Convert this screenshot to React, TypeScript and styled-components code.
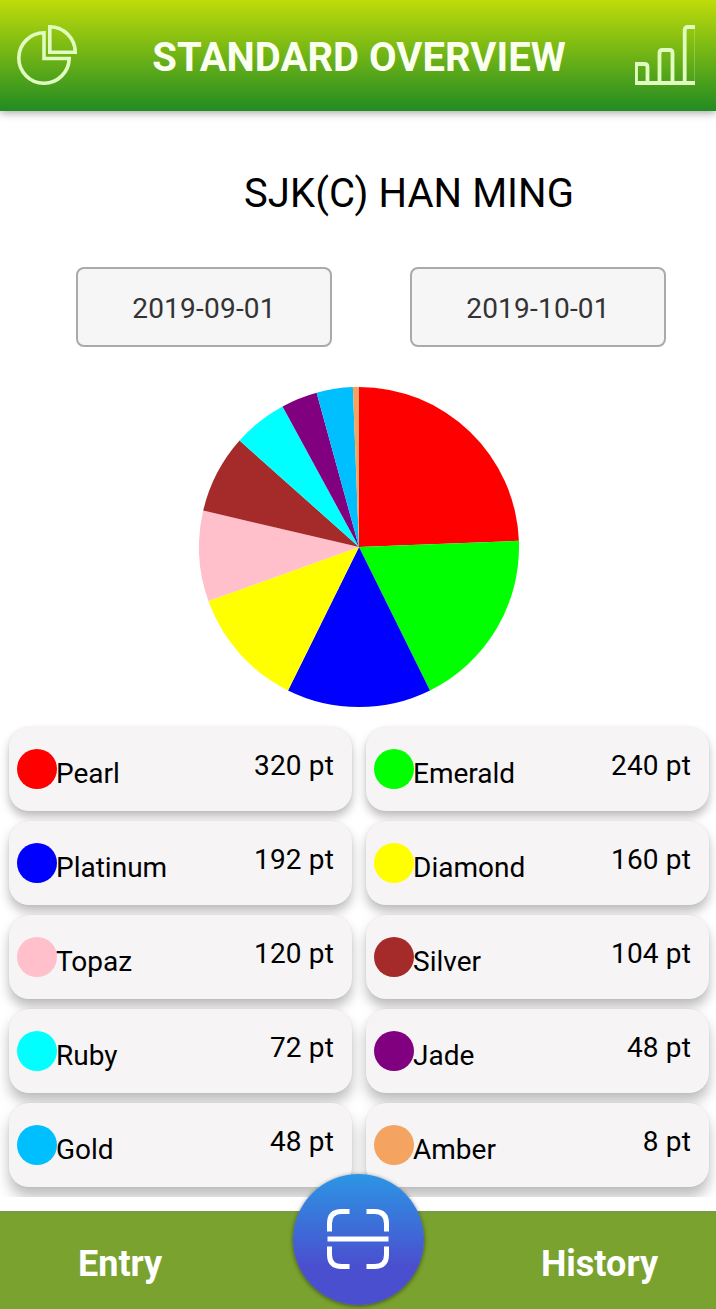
import React from "react";
import styled, { createGlobalStyle } from "styled-components";

const GlobalStyle = createGlobalStyle`
  * { box-sizing: border-box; }
  body { margin: 0; background: #fff; font-family: Roboto, sans-serif; color: #000; }
`;

const Screen = styled.div`
  display: flex;
  flex-direction: column;
  width: 716px;
  height: 1309px;
  overflow: hidden;
  background: #fff;
`;

const Header = styled.header`
  display: flex;
  align-items: center;
  justify-content: space-between;
  flex: none;
  height: 111px;
  padding: 0 21px 1px 17px;
  background: linear-gradient(#bedc0a, #228b22);
  box-shadow: 0 2px 8px rgba(0, 0, 0, 0.35);
`;

const HeaderIcon = styled.svg`
  display: block;
  width: 60px;
  height: 60px;
  fill: none;
  stroke: #e0fcc0;
`;

const Title = styled.h1`
  margin: 0;
  padding: 5px 0 0 6px;
  font-size: 40px;
  line-height: 48px;
  font-weight: 700;
  letter-spacing: 0.04px;
  color: #fbfff0;
  white-space: nowrap;
`;

const School = styled.h2`
  flex: none;
  margin: 59px 0 0;
  padding-left: 102px;
  font-size: 40px;
  line-height: 48px;
  font-weight: 400;
  letter-spacing: 0.06px;
  text-align: center;
`;

const DateRow = styled.div`
  display: flex;
  flex: none;
  gap: 78px;
  margin: 49px 0 0 76px;
`;

const DateButton = styled.button`
  width: 256px;
  height: 80px;
  padding: 2px 0 0 0;
  border: 2px solid #aaa;
  border-radius: 8px;
  background: #f6f6f6;
  color: #333;
  font-family: inherit;
  font-size: 28px;
  letter-spacing: 0.22px;
`;

const Pie = styled.svg`
  display: block;
  flex: none;
  width: 320px;
  height: 320px;
  margin: 40px 0 0 199px;
`;

const CardGrid = styled.section`
  display: grid;
  flex: none;
  grid-template-columns: 343px 343px;
  grid-auto-rows: 84px;
  gap: 10px 14px;
  height: 482px;
  margin-top: 8px;
  padding: 12px 7px 10px 9px;
  overflow: hidden;
`;

const Card = styled.div<{ $depth: number }>`
  display: flex;
  align-items: flex-start;
  padding: 22px 18px 0 8px;
  border-radius: 20px;
  background: #f6f4f5;
  box-shadow:
    0 ${(p) => 6 + p.$depth}px ${(p) => 10 + p.$depth}px rgba(0, 0, 0, 0.26),
    0 0 2px rgba(0, 0, 0, 0.08);
  font-size: 28px;
  line-height: 33px;
`;

const Dot = styled.span<{ $color: string }>`
  flex: none;
  width: 40px;
  height: 40px;
  border-radius: 50%;
  background: ${(p) => p.$color};
`;

const Label = styled.span`
  flex: 1;
  padding-top: 8px;
  margin-left: -1px;
`;

const Points = styled.span`
  letter-spacing: 0.14px;
  white-space: nowrap;
`;

const Footer = styled.footer`
  position: relative;
  display: flex;
  flex: none;
  justify-content: space-between;
  height: 98px;
  margin-top: 14px;
  padding: 32px 58px 0 78px;
  background: linear-gradient(#7a9a45, #7aa22f 4px);
`;

const Tab = styled.a`
  font-size: 36px;
  line-height: 42px;
  font-weight: 700;
  color: #fff;
`;

const ScanButton = styled.button`
  position: absolute;
  left: 293px;
  top: -37px;
  display: flex;
  align-items: center;
  justify-content: center;
  width: 131px;
  height: 131px;
  padding: 0 1px 1px 0;
  border: 0;
  border-radius: 50%;
  background: linear-gradient(#2c96e4, #4a4fcf 70%);
  box-shadow: 0 1px 4px rgba(0, 0, 0, 0.5);
`;

const items = [
  { name: "Pearl", value: 320, color: "#ff0000" },
  { name: "Emerald", value: 240, color: "#00ff00" },
  { name: "Platinum", value: 192, color: "#0000ff" },
  { name: "Diamond", value: 160, color: "#ffff00" },
  { name: "Topaz", value: 120, color: "#ffc0cb" },
  { name: "Silver", value: 104, color: "#a52a2a" },
  { name: "Ruby", value: 72, color: "#00ffff" },
  { name: "Jade", value: 48, color: "#800080" },
  { name: "Gold", value: 48, color: "#00bfff" },
  { name: "Amber", value: 8, color: "#f4a460" },
];

const total = items.reduce((sum, item) => sum + item.value, 0);

const point = (value: number) => {
  const angle = (value / total) * Math.PI * 2;
  return `${160 + 160 * Math.sin(angle)} ${160 - 160 * Math.cos(angle)}`;
};

const slices = items.map((item, i) => {
  const start = items.slice(0, i).reduce((sum, it) => sum + it.value, 0);
  return {
    color: item.color,
    d: `M160 160L${point(start)}A160 160 0 0 1 ${point(start + item.value)}Z`,
  };
});

export default function App() {
  return (
    <>
      <GlobalStyle />
      <Screen>
        <Header>
          <HeaderIcon viewBox="0 0 60 60" strokeWidth="3.6">
            <path d="M27 7.8A25.2 25.2 0 1 0 52.2 33.5H27Z" />
            <path d="M32.8 1.8V27.3H58.2A25.5 25.5 0 0 0 32.8 1.8Z" />
          </HeaderIcon>
          <Title>STANDARD OVERVIEW</Title>
          <HeaderIcon viewBox="0 0 60 60" strokeWidth="3.8">
            <path d="M0 58H60" />
            <path d="M1 58V39H9.5Q12.5 39 12.5 42V58" />
            <path d="M24.5 58V28Q24.5 25 27.5 25H34.5Q37.5 25 37.5 28V58" />
            <path d="M49.7 58V5Q49.7 2 52.7 2H60" />
            <path d="M59.6 2V58" strokeWidth="0.6" opacity="0.5" />
          </HeaderIcon>
        </Header>
        <School>SJK(C) HAN MING</School>
        <DateRow>
          <DateButton>2019-09-01</DateButton>
          <DateButton>2019-10-01</DateButton>
        </DateRow>
        <Pie viewBox="0 0 320 320">
          {slices.map((s) => (
            <path key={s.color} d={s.d} fill={s.color} />
          ))}
        </Pie>
        <CardGrid>
          {items.map((item, i) => (
            <Card key={item.name} $depth={Math.floor(i / 2)}>
              <Dot $color={item.color} />
              <Label>{item.name}</Label>
              <Points>{item.value} pt</Points>
            </Card>
          ))}
        </CardGrid>
        <Footer>
          <Tab>Entry</Tab>
          <Tab>History</Tab>
          <ScanButton aria-label="Scan">
            <svg width="62" height="60" viewBox="0 0 62 60" fill="none" stroke="#fff" strokeWidth="5">
              <path d="M2.5 22.5V14.5Q2.5 2.5 14.5 2.5H22.5" />
              <path d="M39.5 2.5H47.5Q59.5 2.5 59.5 14.5V22.5" />
              <path d="M2.5 37.5V45.5Q2.5 57.5 14.5 57.5H22.5" />
              <path d="M39.5 57.5H47.5Q59.5 57.5 59.5 45.5V37.5" />
              <path d="M0.5 30H61.5" />
            </svg>
          </ScanButton>
        </Footer>
      </Screen>
    </>
  );
}
